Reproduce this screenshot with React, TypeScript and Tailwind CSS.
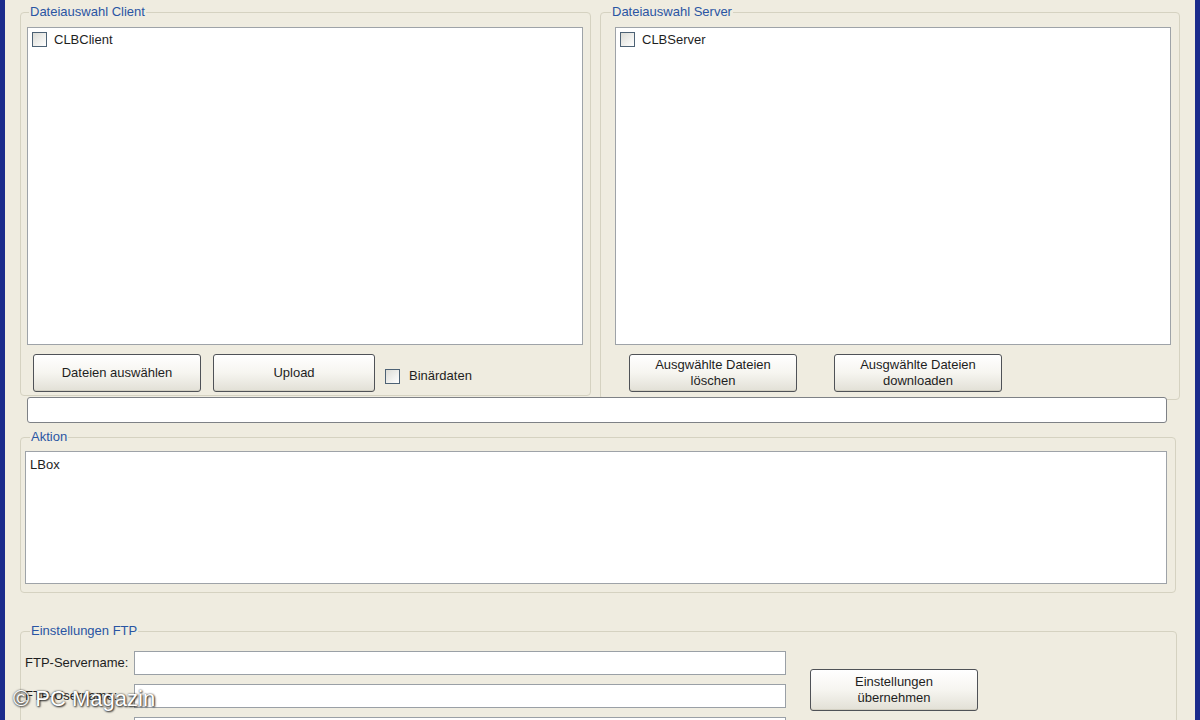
import type { ReactNode } from "react";

function GroupBox({
  title,
  className,
  legendClass,
  children,
}: {
  title: string;
  className: string;
  legendClass: string;
  children: ReactNode;
}) {
  return (
    <fieldset className={`border border-[#d5d2c1] rounded-[4px] ${className}`}>
      <legend className={`px-[1px] text-[13px] leading-[16px] text-[#2a55a3] ${legendClass}`}>
        {title}
      </legend>
      {children}
    </fieldset>
  );
}

function CheckBox() {
  return (
    <span className="inline-block w-[15px] h-[15px] border border-[#4d6275] bg-linear-to-br from-[#dcdcd6] to-white shrink-0" />
  );
}

function XpButton({ children, className }: { children: ReactNode; className: string }) {
  return (
    <button className={`rounded-[3px] border border-[#4f5257] bg-linear-to-b from-white via-[#f6f5f0] to-[#e2e0d6] text-[13px] leading-[16px] text-[#1e1e1e] shadow-[inset_0_-1px_0_#d2cfc2] ${className}`}>
      {children}
    </button>
  );
}

function TextField({ className }: { className: string }) {
  return <div className={`bg-white border border-[#9aa0a6] ${className}`} />;
}

export default function App() {
  return (
    <div className="relative w-[1200px] h-[720px] overflow-hidden bg-[#efece0] border-l-[5px] border-r-[5px] border-[#1b2b8c] font-['Liberation_Sans',Arial,sans-serif] text-[13px] text-[#1e1e1e]">
      <div className="pt-[4px] pl-[15px] flex flex-col">
        {/* Dateiauswahl */}
        <div className="flex items-start gap-[9px]">
          <GroupBox
            title="Dateiauswahl Client"
            className="w-[571px] h-[392px] px-[6px] pt-[7px]"
            legendClass="ml-[2px]"
          >
            <div className="w-[556px] h-[318px] bg-white border border-[#9ea3a8] px-[4px] pt-[4px]">
              <div className="flex items-center gap-[7px]">
                <CheckBox />
                <span className="leading-[15px]">CLBClient</span>
              </div>
            </div>
            <div className="flex items-center mt-[9px] ml-[6px]">
              <XpButton className="h-[38px] w-[168px]">Dateien auswählen</XpButton>
              <XpButton className="ml-[12px] h-[38px] w-[162px]">Upload</XpButton>
              <div className="flex items-center gap-[9px] ml-[10px] mt-[6px]">
                <CheckBox />
                <span>Binärdaten</span>
              </div>
            </div>
          </GroupBox>

          <GroupBox
            title="Dateiauswahl Server"
            className="w-[578px] h-[396px] px-[8px] pt-[7px]"
            legendClass="ml-[2px]"
          >
            <div className="ml-[6px] w-[556px] h-[318px] bg-white border border-[#9ea3a8] px-[4px] pt-[4px]">
              <div className="flex items-center gap-[7px]">
                <CheckBox />
                <span className="leading-[15px]">CLBServer</span>
              </div>
            </div>
            <div className="flex items-center mt-[9px] ml-[20px] gap-[37px]">
              <XpButton className="h-[38px] w-[168px]">
                Ausgwählte Dateien
                <br />
                löschen
              </XpButton>
              <XpButton className="h-[38px] w-[168px]">
                Ausgwählte Dateien
                <br />
                downloaden
              </XpButton>
            </div>
          </GroupBox>
        </div>

        {/* Status */}
        <div className="relative mt-[-3px] ml-[7px] w-[1140px] h-[26px] bg-white border border-[#7e8186] rounded-[3px]" />

        {/* Aktion */}
        <GroupBox
          title="Aktion"
          className="mt-[6px] w-[1156px] px-[4px] pt-[6px] pb-[8px]"
          legendClass="ml-[5px]"
        >
          <div className="w-[1142px] h-[133px] bg-white border border-[#9ea3a8] px-[4px] pt-[3px]">
            LBox
          </div>
        </GroupBox>

        {/* Einstellungen FTP */}
        <GroupBox
          title="Einstellungen FTP"
          className="mt-[30px] w-[1157px] h-[140px] px-[4px] pt-[12px]"
          legendClass="ml-[5px]"
        >
          <div className="flex items-start">
            <div className="flex flex-col gap-[9px]">
              {["FTP-Servername:", "FTP-Username:", "Passwort:"].map((label) => (
                <div key={label} className="flex items-center">
                  <span className="w-[109px] whitespace-nowrap">{label}</span>
                  <TextField className="w-[652px] h-[24px]" />
                </div>
              ))}
            </div>
            <XpButton className="ml-[24px] mt-[18px] h-[42px] w-[168px]">
              Einstellungen
              <br />
              übernehmen
            </XpButton>
          </div>
        </GroupBox>
      </div>

      {/* watermark */}
      <div className="absolute left-[8px] top-[686px] text-[22px] leading-[26px] text-white [text-shadow:0_0_2px_#333,1px_1px_2px_#222]">
        © PC Magazin
      </div>
    </div>
  );
}
